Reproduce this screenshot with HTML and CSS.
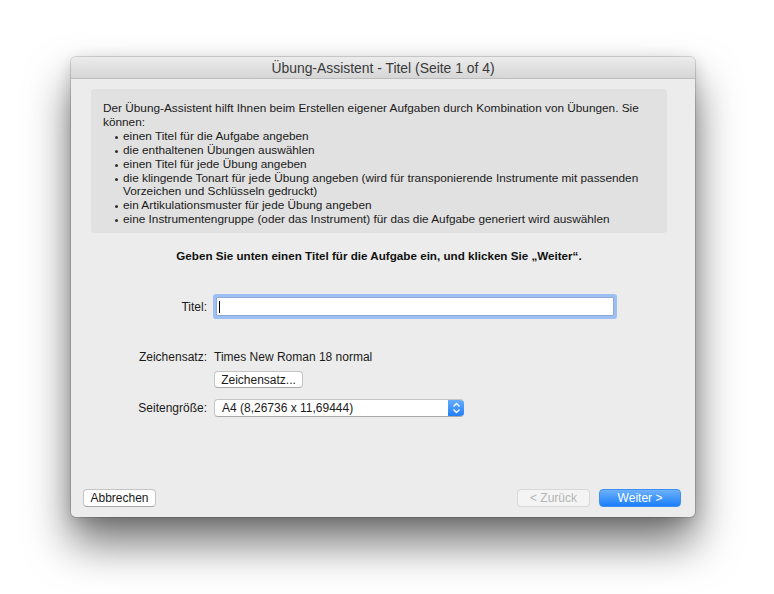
FILE: index.html
```html
<!DOCTYPE html>
<html lang="de">
<head>
<meta charset="utf-8">
<title>Übung-Assistent</title>
<link rel="stylesheet" href="styles.css">
</head>
<body>
<div class="window">
  <div class="titlebar">Übung-Assistent - Titel (Seite 1 of 4)</div>
  <div class="content">
    <div class="info">
      <p>Der Übung-Assistent hilft Ihnen beim Erstellen eigener Aufgaben durch Kombination von Übungen. Sie<br>können:</p>
      <ul class="bullets">
        <li>einen Titel für die Aufgabe angeben</li>
        <li>die enthaltenen Übungen auswählen</li>
        <li>einen Titel für jede Übung angeben</li>
        <li>die klingende Tonart für jede Übung angeben (wird für transponierende Instrumente mit passenden<br>Vorzeichen und Schlüsseln gedruckt)</li>
        <li>ein Artikulationsmuster für jede Übung angeben</li>
        <li>eine Instrumentengruppe (oder das Instrument) für das die Aufgabe generiert wird auswählen</li>
      </ul>
    </div>
    <p class="prompt">Geben Sie unten einen Titel für die Aufgabe ein, und klicken Sie „Weiter“.</p>
    <div class="form">
      <div class="row row-title">
        <span class="label">Titel:</span>
        <div class="field"><span class="caret"></span></div>
      </div>
      <div class="row row-font">
        <span class="label">Zeichensatz:</span>
        <span class="value">Times New Roman 18 normal</span>
      </div>
      <div class="row row-fontbtn">
        <span class="label"></span>
        <span class="btn btn-small">Zeichensatz...</span>
      </div>
      <div class="row row-size">
        <span class="label">Seitengröße:</span>
        <div class="popup">
          <span class="popup-text">A4 (8,26736 x 11,69444)</span>
          <span class="stepper">
            <svg width="9" height="12" viewBox="0 0 9 12"><path d="M1.5 4.5 L4.5 1.5 L7.5 4.5 M1.5 7.5 L4.5 10.5 L7.5 7.5" fill="none" stroke="#fff" stroke-width="1.4"/></svg>
          </span>
        </div>
      </div>
    </div>
    <div class="footer">
      <span class="btn">Abbrechen</span>
      <div class="nav">
        <span class="btn btn-disabled">&lt; Zurück</span>
        <span class="btn btn-primary">Weiter &gt;</span>
      </div>
    </div>
  </div>
</div>
</body>
</html>
```

FILE: styles.css
```css
* { box-sizing: border-box; }
html { height: 100%; background: #ffffff; }
body {
  margin: 0;
  min-height: 594px;
  padding: 57px 0 0 71px;
  font-family: "Liberation Sans", Arial, sans-serif;
  font-size: 12px;
  color: #1a1a1a;
  background: #ffffff;
}
.window {
  width: 624px;
  height: 460px;
  border-radius: 5px;
  background: #ececec;
  display: flex;
  flex-direction: column;
  box-shadow: 0 0 0 1px rgba(0,0,0,0.14), 0 26px 44px rgba(0,0,0,0.55), 0 4px 16px rgba(0,0,0,0.16);
  overflow: hidden;
}
.titlebar {
  height: 22px;
  flex: none;
  background: linear-gradient(#ececec, #d6d6d6);
  border-bottom: 1px solid #bdbdbd;
  text-align: center;
  font-size: 13.9px;
  line-height: 22px;
  color: #3a3a3a;
}
.content {
  flex: 1;
  display: flex;
  flex-direction: column;
  padding: 10px 0 10px 0;
}
.info {
  margin: 0 28px 0 20px;
  background: #e1e1e1;
  border-radius: 4px;
  padding: 13px 12px 6px 12px;
  font-size: 11.8px;
  line-height: 13.9px;
  height: 144px;
}
.info p { margin: 0; }
.bullets { margin: 0; padding: 0 0 0 20px; list-style: none; }
.bullets li { position: relative; }
.bullets li::before {
  content: "";
  position: absolute;
  left: -8px;
  top: 6px;
  width: 3px;
  height: 3px;
  border-radius: 50%;
  background: #333;
}
.prompt {
  margin: 16px 28px 0 20px;
  text-align: center;
  font-weight: bold;
  font-size: 11.65px;
  line-height: 14px;
  color: #111;
}
.form {
  display: flex;
  flex-direction: column;
  margin-left: 20px;
}
.row { display: flex; align-items: center; }
.label {
  width: 116px;
  flex: none;
  text-align: right;
  margin-right: 7px;
}
.row-title { margin-top: 34px; height: 19px; }
.field {
  width: 398px;
  height: 19px;
  margin-left: 2px;
  background: #fff;
  border: 1px solid #8ea9d8;
  box-shadow: 0 0 0 3px #9cc0f4;
  border-radius: 1px;
  position: relative;
}
.caret {
  position: absolute;
  left: 2px;
  top: 3px;
  width: 1px;
  height: 12px;
  background: #000;
}
.row-font { margin-top: 34px; height: 14px; }
.row-fontbtn { margin-top: 7px; }
.row-size { margin-top: 11px; }
.btn {
  display: inline-flex;
  align-items: center;
  justify-content: center;
  height: 18px;
  padding: 0 8px;
  background: #fff;
  border: 1px solid #c4c4c4;
  border-bottom-color: #a9a9a9;
  border-radius: 4px;
  font-size: 12px;
  color: #1a1a1a;
  white-space: nowrap;
}
.btn-small { width: 89px; height: 17px; }
.popup {
  display: flex;
  width: 250px;
  height: 18px;
  background: #fff;
  border: 1px solid #c4c4c4;
  border-bottom-color: #a9a9a9;
  border-right: none;
  border-radius: 4px;
  overflow: hidden;
}
.popup-text { flex: 1; padding-left: 7px; line-height: 16px; }
.stepper {
  width: 16px;
  display: flex;
  align-items: center;
  justify-content: center;
  background: linear-gradient(#6aaefb, #1d7dfa);
  margin: -1px 0;
}
.footer {
  margin-top: auto;
  display: flex;
  justify-content: space-between;
  align-items: center;
  padding: 0 14px 0 12px;
}
.footer > .btn { width: 73px; }
.nav { display: flex; gap: 9px; }
.btn-disabled {
  width: 73px;
  background: #f4f4f4;
  border-color: #d8d8d8;
  color: #b4b4b4;
}
.btn-primary {
  width: 82px;
  background: linear-gradient(#6cb1fb, #1b7ffa);
  border: 1px solid #3f8ef5;
  color: #fff;
}
```
